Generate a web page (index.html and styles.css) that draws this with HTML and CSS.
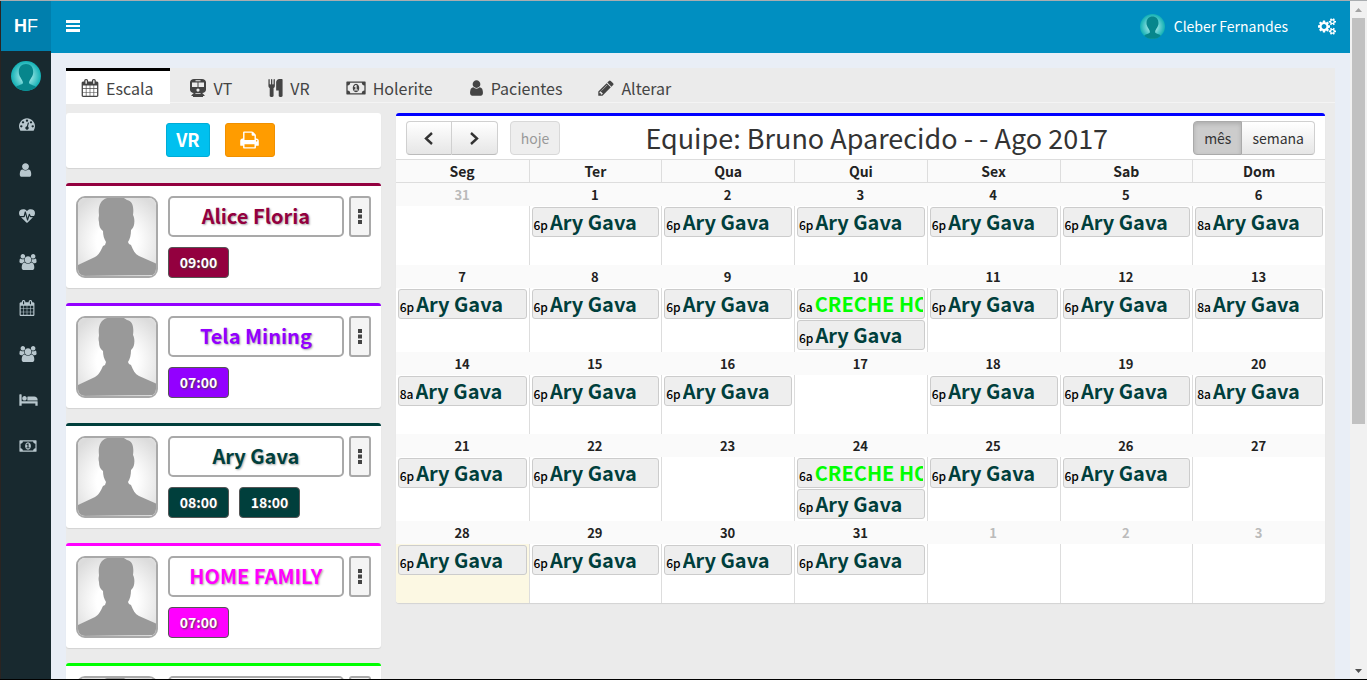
FILE: index.html
```html
<!DOCTYPE html>
<html lang="pt-BR">
<head>
<meta charset="utf-8">
<title>Escala - Home Family</title>
<link rel="stylesheet" href="styles.css">
</head>
<body>
<svg class="sprite" aria-hidden="true">
  <symbol id="i-user" viewBox="256 0 1280 1792"><path d="M1536 1399q0 109-62.500 187t-150.500 78h-854q-88 0-150.500-78t-62.500-187q0-85 8.500-160.500t31.500-152 58.500-131 94-89 134.500-34.500q131 128 313 128t313-128q76 0 134.500 34.500t94 89 58.500 131 31.500 152 8.500 160.500zm-256-887q0 159-112.500 271.500t-271.500 112.500-271.500-112.500-112.500-271.500 112.500-271.500 271.500-112.500 271.500 112.500 112.500 271.500z"/></symbol>
  <symbol id="i-calendar" viewBox="64 0 1664 1792"><path d="M192 1664h288v-288h-288v288zm352 0h320v-288h-320v288zm-352-352h288v-320h-288v320zm352 0h320v-320h-320v320zm-352-384h288v-288h-288v288zm736 736h320v-288h-320v288zm-384-736h320v-288h-320v288zm768 736h288v-288h-288v288zm-384-352h320v-320h-320v320zm-352-864v-288q0-13-9.500-22.500t-22.500-9.500h-64q-13 0-22.500 9.500t-9.500 22.500v288q0 13 9.500 22.500t22.500 9.500h64q13 0 22.500-9.500t9.500-22.500zm736 864h288v-320h-288v320zm-384-384h320v-288h-320v288zm384 0h288v-288h-288v288zm32-480v-288q0-13-9.500-22.500t-22.500-9.500h-64q-13 0-22.500 9.500t-9.500 22.500v288q0 13 9.500 22.500t22.500 9.500h64q13 0 22.500-9.500t9.500-22.500zm384-64v1280q0 52-38 90t-90 38h-1408q-52 0-90-38t-38-90v-1280q0-52 38-90t90-38h128v-96q0-66 47-113t113-47h64q66 0 113 47t47 113v96h384v-96q0-66 47-113t113-47h64q66 0 113 47t47 113v96h128q52 0 90 38t38 90z"/></symbol>
  <symbol id="i-cutlery" viewBox="192 0 1408 1792"><path d="M832 64v640q0 61-35.500 111t-92.500 70v779q0 52-38 90t-90 38h-128q-52 0-90-38t-38-90v-779q-57-20-92.500-70t-35.500-111v-640q0-26 19-45t45-19 45 19 19 45v416q0 26 19 45t45 19 45-19 19-45v-416q0-26 19-45t45-19 45 19 19 45v416q0 26 19 45t45 19 45-19 19-45v-416q0-26 19-45t45-19 45 19 19 45zm768 0v1600q0 52-38 90t-90 38h-128q-52 0-90-38t-38-90v-512h-224q-13 0-22.500-9.500t-9.500-22.500v-800q0-132 94-226t226-94h256q26 0 45 19t19 45z"/></symbol>
  <symbol id="i-pencil" viewBox="128 0 1536 1792"><path d="M491 1536l91-91-235-235-91 91v107h128v128h107zm523-928q0-22-22-22-10 0-17 7l-542 542q-7 7-7 17 0 22 22 22 10 0 17-7l542-542q7-7 7-17zm-54-192l416 416-832 832h-416v-416zm683 96q0 53-37 90l-166 166-416-416 166-165q36-38 90-38 53 0 91 38l235 234q37 39 37 91z"/></symbol>
  <symbol id="i-print" viewBox="64 0 1664 1792"><path d="M448 1536h896v-256h-896v256zm0-640h896v-384h-160q-40 0-68-28t-28-68v-160h-640v640zm1152 64q0-26-19-45t-45-19-45 19-19 45 19 45 45 19 45-19 19-45zm128 0v416q0 13-9.500 22.500t-22.500 9.500h-224v160q0 40-28 68t-68 28h-960q-40 0-68-28t-28-68v-160h-224q-13 0-22.500-9.500t-9.500-22.500v-416q0-79 56.500-135.500t135.500-56.500h64v-544q0-40 28-68t68-28h672q40 0 88 20t76 48l152 152q28 28 48 76t20 88v256h64q79 0 135.500 56.500t56.500 135.500z"/></symbol>
  <symbol id="i-gauge" viewBox="0 0 1792 1792"><path d="M384 1152q0-53-37.500-90.500t-90.500-37.500-90.500 37.500-37.500 90.500 37.500 90.500 90.500 37.500 90.500-37.500 37.500-90.500zm192-448q0-53-37.500-90.500t-90.500-37.500-90.500 37.500-37.500 90.500 37.500 90.500 90.500 37.500 90.500-37.500 37.500-90.500zm428 481l101-382q6-26-7.500-48.500t-38.500-29.500-48 6.500-30 39.500l-101 382q-60 5-107 43.500t-63 98.500q-20 77 20 146t117 89 146-20 89-117q16-60-6-117t-72-91zm660-33q0-53-37.500-90.500t-90.500-37.500-90.500 37.500-37.500 90.500 37.500 90.500 90.500 37.500 90.500-37.500 37.500-90.500zm-640-640q0-53-37.500-90.500t-90.500-37.500-90.500 37.500-37.500 90.500 37.500 90.500 90.500 37.500 90.500-37.500 37.500-90.500zm448 192q0-53-37.500-90.500t-90.500-37.500-90.500 37.500-37.500 90.500 37.500 90.500 90.500 37.500 90.500-37.500 37.500-90.500zm320 448q0 261-141 483-19 29-54 29h-1402q-35 0-54-29-141-221-141-483 0-182 71-348t191-286 286-191 348-71 348 71 286 191 191 286 71 348z"/></symbol>
  <symbol id="i-heart" viewBox="0 0 1792 1792"><path d="M1280 1024h305q-5 6-10 10.500t-9 7.500l-3 4-623 600q-18 18-44 18t-44-18l-624-602q-5-2-21-20h369q22 0 39.500-13.500t22.500-34.500l70-281 190 667q6 20 23 33t39 13q21 0 38-13t23-33l146-485 56 112q18 35 57 35zm512-428q0 145-103 300h-369l-111-221q-8-17-25.500-27t-36.500-8q-45 5-56 46l-129 430-196-686q-6-20-23.500-33t-39.500-13-39 13.500-22 34.500l-116 464h-423q-103-155-103-300 0-220 127-344t351-124q62 0 126.500 21.500t120 58 95.500 68.500 76 68q36-36 76-68t95.500-68.500 120-58 126.500-21.500q224 0 351 124t127 344z"/></symbol>
  <symbol id="i-users" viewBox="64 0 1920 1792"><path d="M657 896q-162 5-265 128h-134q-82 0-138-40.500t-56-118.500q0-353 124-353 6 0 43.500 21t97.500 42.500 119 21.500q67 0 133-23-5 37-5 66 0 139 81 256zm1071 637q0 120-73 189.500t-194 69.500h-874q-121 0-194-69.500t-73-189.500q0-53 3.500-103.500t14-109 26.500-108.500 43-97.500 62-81 85.500-53.500 111.500-20q10 0 43 21.500t73 48 107 48 135 21.500 135-21.500 107-48 73-48 43-21.500q61 0 111.500 20t85.500 53.500 62 81 43 97.500 26.500 108.500 14 109 3.500 103.500zm-1024-1277q0 106-75 181t-181 75-181-75-75-181 75-181 181-75 181 75 75 181zm704 384q0 159-112.500 271.500t-271.500 112.500-271.500-112.500-112.500-271.500 112.500-271.500 271.500-112.500 271.500 112.500 112.500 271.500zm576 225q0 78-56 118.500t-138 40.500h-134q-103-123-265-128 81-117 81-256 0-29-5-66 66 23 133 23 59 0 119-21.500t97.500-42.500 43.500-21q124 0 124 353zm-128-609q0 106-75 181t-181 75-181-75-75-181 75-181 181-75 181 75 75 181z"/></symbol>
  <symbol id="i-bed" viewBox="0 0 2048 1792"><path d="M256 1024h1728q26 0 45 19t19 45v448h-256v-256h-1536v256h-256v-1216q0-26 19-45t45-19h128q26 0 45 19t19 45v704zm576-320q0-106-75-181t-181-75-181 75-75 181 75 181 181 75 181-75 75-181zm1216 256v-64q0-159-112.500-271.500t-271.500-112.500h-704q-26 0-45 19t-19 45v384h1152z"/></symbol>
  <symbol id="i-money" viewBox="0 0 1920 1792"><path d="M768 1152h384v-96h-128v-448h-114l-148 137 77 80q42-37 55-57h2v288h-128v96zm512-256q0 70-21 142t-59.500 134-101.500 101-138 39-138-39-101.500-101-59.500-134-21-142 21-142 59.500-134 101.500-101 138-39 138 39 101.500 101 59.500 134 21 142zm512 256v-512q-106 0-181-75t-75-181h-1152q0 106-75 181t-181 75v512q106 0 181 75t75 181h1152q0-106 75-181t181-75zm128-832v1152q0 26-19 45t-45 19h-1792q-26 0-45-19t-19-45v-1152q0-26 19-45t45-19h1792q26 0 45 19t19 45z"/></symbol>
  <symbol id="i-cogs" viewBox="0 0 1920 1792"><path d="M896 896q0-106-75-181t-181-75-181 75-75 181 75 181 181 75 181-75 75-181zm768 512q0-52-38-90t-90-38-90 38-38 90q0 53 37.500 90.500t90.500 37.500 90.500-37.500 37.500-90.500zm0-1024q0-52-38-90t-90-38-90 38-38 90q0 53 37.500 90.500t90.500 37.500 90.500-37.500 37.500-90.500zm-384 421v185q0 10-7 19.500t-16 10.500l-155 24q-11 35-32 76 34 48 90 115 7 10 7 20 0 12-7 19-23 30-82.500 89.500t-78.500 59.500q-11 0-21-7l-115-90q-37 19-77 31-11 108-23 155-7 24-30 24h-186q-11 0-20-7.500t-10-17.500l-23-153q-34-10-75-31l-118 89q-7 7-20 7-11 0-21-8-144-133-144-160 0-9 7-19 10-14 41-53t47-61q-23-44-35-82l-152-24q-10-1-17-9.500t-7-19.500v-185q0-10 7-19.500t16-10.500l155-24q11-35 32-76-34-48-90-115-7-11-7-20 0-12 7-20 22-30 82-89t79-59q11 0 21 7l115 90q34-18 77-32 11-108 23-154 7-24 30-24h186q11 0 20 7.500t10 17.500l23 153q34 10 75 31l118-89q8-7 20-7 11 0 21 8 144 133 144 160 0 9-7 19-12 16-42 54t-45 60q23 48 34 82l152 23q10 2 17 10.500t7 19.500zm640 533v140q0 16-149 31-12 27-30 52 51 113 51 138 0 4-4 7-122 71-124 71-8 0-46-47t-52-68q-20 2-30 2t-30-2q-14 21-52 68t-46 47q-2 0-124-71-4-3-4-7 0-25 51-138-18-25-30-52-149-15-149-31v-140q0-16 149-31 13-29 30-52-51-113-51-138 0-4 4-7 4-2 35-20t59-34 30-16q8 0 46 46.500t52 67.500q20-2 30-2t30 2q51-71 92-112l6-2q4 0 124 70 4 3 4 7 0 25-51 138 17 23 30 52 149 15 149 31zm0-1024v140q0 16-149 31-12 27-30 52 51 113 51 138 0 4-4 7-122 71-124 71-8 0-46-47t-52-68q-20 2-30 2t-30-2q-14 21-52 68t-46 47q-2 0-124-71-4-3-4-7 0-25 51-138-18-25-30-52-149-15-149-31v-140q0-16 149-31 13-29 30-52-51-113-51-138 0-4 4-7 4-2 35-20t59-34 30-16q8 0 46 46.500t52 67.500q20-2 30-2t30 2q51-71 92-112l6-2q4 0 124 70 4 3 4 7 0 25-51 138 17 23 30 52 149 15 149 31z"/></symbol>
  <symbol id="i-train" viewBox="0 0 16 18"><path fill-rule="evenodd" d="M4 0h8c2.200 0 4 1.400 4 3.200v7.600c0 1.800-1.700 3.200-3.800 3.200l2.300 2.300c.3.300.1.700-.3.700H13v1H3v-1H1.800c-.4 0-.6-.4-.3-.7L3.800 14C1.700 14 0 12.600 0 10.800V3.200C0 1.400 1.800 0 4 0zM5.500 1.200v1h5v-1zM2 3.500V8h5.500V3.500zM8.500 3.500V8H14V3.500zM8 9.500a1.600 1.600 0 1 0 0 3.200 1.600 1.600 0 0 0 0-3.200zM5 15h6l-.8-.7H5.800z"/></symbol>
  <symbol id="i-bars" viewBox="0 0 14 12"><path d="M0 0h14v3H0zM0 5h14v2H0zM0 9h14v3H0z"/></symbol>
  <symbol id="i-dots" viewBox="0 0 4 15"><path d="M0 0h4v4H0zM0 5.500h4v4H0zM0 11h4v4H0z"/></symbol>
  <symbol id="i-left" viewBox="0 0 9 13"><path fill="none" stroke="currentColor" stroke-width="2.400" d="M8 1L2 6.500 8 12"/></symbol>
  <symbol id="i-right" viewBox="0 0 9 13"><path fill="none" stroke="currentColor" stroke-width="2.400" d="M1 1l6 5.500L1 12"/></symbol>
  <symbol id="i-photo" viewBox="0 0 78 78"><rect width="78" height="78" fill="url(#backdrop)"/><path fill="#999" d="M0 78V67l17-8c4-2 6-7 8-11l2-1 1-3c-2-3-3-7-3-11-3-2-4-5-4-9-1-4 0-5 0-7-1-8 1-15 8-17 8-3 15-2 20 2 6 1 7 8 6 15 2 3 2 11-1 14l-1 1c0 5-1 9-3 12l1 2 2 1c2 5 4 9 8 11l18 8v11z"/></symbol>
  <symbol id="i-face" viewBox="0 0 30 30"><circle cx="15" cy="15" r="15" fill="url(#teal)"/><path fill="#07868c" d="M5 26c2-2 6-2 7-4 0-3-3-5-4-9-1-6 2-10 7-10s8 4 7 10c-1 4-4 6-4 9 1 2 5 2 7 4a15 15 0 0 1-20 0z"/></symbol>
  <radialGradient id="backdrop" cx="50%" cy="55%" r="65%"><stop offset="40%" stop-color="#fff"/><stop offset="100%" stop-color="#dcdcdc"/></radialGradient>
  <radialGradient id="teal"><stop offset="35%" stop-color="#8fe0e0"/><stop offset="100%" stop-color="#10b0b4"/></radialGradient>
</svg>

<div class="app">
  <aside class="sidebar">
    <a class="logo" href="#"><span><b>H</b>F</span></a>
    <a class="me" href="#" aria-label="Perfil"><svg class="face"><use href="#i-face"/></svg></a>
    <nav class="menu">
      <a href="#" aria-label="Painel"><svg class="ic w16"><use href="#i-gauge"/></svg></a>
      <a href="#" aria-label="Usuário"><svg class="ic w13"><use href="#i-user"/></svg></a>
      <a href="#" aria-label="Saúde"><svg class="ic w16"><use href="#i-heart"/></svg></a>
      <a href="#" aria-label="Equipes"><svg class="ic w18"><use href="#i-users"/></svg></a>
      <a href="#" aria-label="Calendário"><svg class="ic w16"><use href="#i-calendar"/></svg></a>
      <a href="#" aria-label="Grupos"><svg class="ic w18"><use href="#i-users"/></svg></a>
      <a href="#" aria-label="Pacientes"><svg class="ic w19"><use href="#i-bed"/></svg></a>
      <a href="#" aria-label="Financeiro"><svg class="ic w18"><use href="#i-money"/></svg></a>
    </nav>
  </aside>

  <div class="page">
    <header class="topbar">
      <button class="plain" type="button" aria-label="Menu"><svg class="bars"><use href="#i-bars"/></svg></button>
      <div class="account">
        <a class="who" href="#"><svg class="face small"><use href="#i-face"/></svg>Cleber Fernandes</a>
        <button class="plain" type="button" aria-label="Configurações"><svg class="cogs"><use href="#i-cogs"/></svg></button>
      </div>
    </header>

    <main class="content">
      <div class="panel">
        <nav class="tabs">
          <a class="tab active" href="#"><svg class="t18"><use href="#i-calendar"/></svg>Escala</a>
          <a class="tab" href="#"><svg class="t16"><use href="#i-train"/></svg>VT</a>
          <a class="tab" href="#"><svg class="t15"><use href="#i-cutlery"/></svg>VR</a>
          <a class="tab" href="#"><svg class="t20"><use href="#i-money"/></svg>Holerite</a>
          <a class="tab" href="#"><svg class="t15"><use href="#i-user"/></svg>Pacientes</a>
          <a class="tab" href="#"><svg class="t16"><use href="#i-pencil"/></svg>Alterar</a>
        </nav>

        <div class="columns">
          <section class="team">
            <div class="box actions">
              <button class="btn info" type="button">VR</button>
              <button class="btn warn" type="button" aria-label="Imprimir"><svg><use href="#i-print"/></svg></button>
            </div>
            <article class="box card wine">
              <svg class="photo"><use href="#i-photo"/></svg>
              <div class="info-col">
                <div class="line"><button class="name" type="button">Alice Floria</button><button class="more" type="button" aria-label="Opções"><svg><use href="#i-dots"/></svg></button></div>
                <div class="times"><button class="time" type="button">09:00</button></div>
              </div>
            </article>
            <article class="box card violet">
              <svg class="photo"><use href="#i-photo"/></svg>
              <div class="info-col">
                <div class="line"><button class="name" type="button">Tela Mining</button><button class="more" type="button" aria-label="Opções"><svg><use href="#i-dots"/></svg></button></div>
                <div class="times"><button class="time" type="button">07:00</button></div>
              </div>
            </article>
            <article class="box card pine">
              <svg class="photo"><use href="#i-photo"/></svg>
              <div class="info-col">
                <div class="line"><button class="name" type="button">Ary Gava</button><button class="more" type="button" aria-label="Opções"><svg><use href="#i-dots"/></svg></button></div>
                <div class="times"><button class="time" type="button">08:00</button><button class="time" type="button">18:00</button></div>
              </div>
            </article>
            <article class="box card magenta">
              <svg class="photo"><use href="#i-photo"/></svg>
              <div class="info-col">
                <div class="line"><button class="name" type="button">HOME FAMILY</button><button class="more" type="button" aria-label="Opções"><svg><use href="#i-dots"/></svg></button></div>
                <div class="times"><button class="time" type="button">07:00</button></div>
              </div>
            </article>
            <article class="box card lime">
              <svg class="photo"><use href="#i-photo"/></svg>
              <div class="info-col">
                <div class="line"><button class="name" type="button"></button><button class="more" type="button" aria-label="Opções"><svg><use href="#i-dots"/></svg></button></div>
              </div>
            </article>
          </section>

          <section class="box calendar">
            <div class="toolbar">
              <div class="tools">
                <div class="group">
                  <button class="fc" type="button" aria-label="Anterior"><svg><use href="#i-left"/></svg></button>
                  <button class="fc" type="button" aria-label="Próximo"><svg><use href="#i-right"/></svg></button>
                </div>
                <button class="fc today-btn" type="button" disabled>hoje</button>
              </div>
              <h2>Equipe: Bruno Aparecido - - Ago 2017</h2>
              <div class="group">
                <button class="fc text on" type="button">mês</button>
                <button class="fc text" type="button">semana</button>
              </div>
            </div>
            <table>
              <thead><tr><th>Seg</th><th>Ter</th><th>Qua</th><th>Qui</th><th>Sex</th><th>Sab</th><th>Dom</th></tr></thead>
              <tbody>
                <tr class="nums"><td class="off">31</td><td>1</td><td>2</td><td>3</td><td>4</td><td>5</td><td>6</td></tr>
                <tr class="days">
                  <td></td>
                  <td><a class="ev" href="#"><span>6p</span><b>Ary Gava</b></a></td>
                  <td><a class="ev" href="#"><span>6p</span><b>Ary Gava</b></a></td>
                  <td><a class="ev" href="#"><span>6p</span><b>Ary Gava</b></a></td>
                  <td><a class="ev" href="#"><span>6p</span><b>Ary Gava</b></a></td>
                  <td><a class="ev" href="#"><span>6p</span><b>Ary Gava</b></a></td>
                  <td><a class="ev" href="#"><span>8a</span><b>Ary Gava</b></a></td>
                </tr>
                <tr class="nums"><td>7</td><td>8</td><td>9</td><td>10</td><td>11</td><td>12</td><td>13</td></tr>
                <tr class="days">
                  <td><a class="ev" href="#"><span>6p</span><b>Ary Gava</b></a></td>
                  <td><a class="ev" href="#"><span>6p</span><b>Ary Gava</b></a></td>
                  <td><a class="ev" href="#"><span>6p</span><b>Ary Gava</b></a></td>
                  <td><a class="ev green" href="#"><span>6a</span><b>CRECHE HO</b></a><a class="ev" href="#"><span>6p</span><b>Ary Gava</b></a></td>
                  <td><a class="ev" href="#"><span>6p</span><b>Ary Gava</b></a></td>
                  <td><a class="ev" href="#"><span>6p</span><b>Ary Gava</b></a></td>
                  <td><a class="ev" href="#"><span>8a</span><b>Ary Gava</b></a></td>
                </tr>
                <tr class="nums"><td>14</td><td>15</td><td>16</td><td>17</td><td>18</td><td>19</td><td>20</td></tr>
                <tr class="days">
                  <td><a class="ev" href="#"><span>8a</span><b>Ary Gava</b></a></td>
                  <td><a class="ev" href="#"><span>6p</span><b>Ary Gava</b></a></td>
                  <td><a class="ev" href="#"><span>6p</span><b>Ary Gava</b></a></td>
                  <td></td>
                  <td><a class="ev" href="#"><span>6p</span><b>Ary Gava</b></a></td>
                  <td><a class="ev" href="#"><span>6p</span><b>Ary Gava</b></a></td>
                  <td><a class="ev" href="#"><span>8a</span><b>Ary Gava</b></a></td>
                </tr>
                <tr class="nums"><td>21</td><td>22</td><td>23</td><td>24</td><td>25</td><td>26</td><td>27</td></tr>
                <tr class="days">
                  <td><a class="ev" href="#"><span>6p</span><b>Ary Gava</b></a></td>
                  <td><a class="ev" href="#"><span>6p</span><b>Ary Gava</b></a></td>
                  <td></td>
                  <td><a class="ev green" href="#"><span>6a</span><b>CRECHE HO</b></a><a class="ev" href="#"><span>6p</span><b>Ary Gava</b></a></td>
                  <td><a class="ev" href="#"><span>6p</span><b>Ary Gava</b></a></td>
                  <td><a class="ev" href="#"><span>6p</span><b>Ary Gava</b></a></td>
                  <td></td>
                </tr>
                <tr class="nums"><td>28</td><td>29</td><td>30</td><td>31</td><td class="off">1</td><td class="off">2</td><td class="off">3</td></tr>
                <tr class="days">
                  <td class="today"><a class="ev" href="#"><span>6p</span><b>Ary Gava</b></a></td>
                  <td><a class="ev" href="#"><span>6p</span><b>Ary Gava</b></a></td>
                  <td><a class="ev" href="#"><span>6p</span><b>Ary Gava</b></a></td>
                  <td><a class="ev" href="#"><span>6p</span><b>Ary Gava</b></a></td>
                  <td></td><td></td><td></td>
                </tr>
              </tbody>
            </table>
          </section>
        </div>
      </div>
    </main>
  </div>

  <div class="scroll" aria-hidden="true">
    <svg class="arrow up" viewBox="0 0 17 17"><path d="M5 11l3.500-4 3.500 4z"/></svg>
    <div class="track"><div class="thumb"></div></div>
    <svg class="arrow" viewBox="0 0 17 17"><path d="M5 7l3.500 4L12 7z"/></svg>
  </div>
</div>
</body>
</html>
```
FILE: styles.css
```css
* { box-sizing: border-box; }
body {
  margin: 0;
  font-family: "Noto Sans CJK SC", "Noto Sans", sans-serif;
  font-size: 13px;
  line-height: 18px;
  color: #333;
  background: #e9eef6;
}
a { color: inherit; text-decoration: none; }
button { font: inherit; color: inherit; padding: 0; margin: 0; cursor: pointer; }
svg { display: block; fill: currentColor; flex: none; }
.sprite { position: absolute; width: 0; height: 0; }

.app {
  display: grid;
  grid-template-columns: 51px minmax(0, 1fr) 17px;
  height: 100vh;
  overflow: hidden;
  border-top: 1px solid #a9adb0;
  border-bottom: 1px solid #000;
}

/* Sidebar */
.sidebar { background: #18292f; border-left: 1px solid #2a2422; color: #b8c7ce; }
.logo {
  display: flex; align-items: center; justify-content: center;
  height: 50px; background: #007fad; color: #fff;
  font: 18px "Liberation Sans", sans-serif;
}
.me { display: block; padding: 10px; }
.face { width: 30px; height: 30px; }
.face.small { width: 25px; height: 25px; }
.menu a { display: flex; align-items: center; height: 46px; padding-left: 18px; }
.ic { height: 16px; }
.w13 { width: 13px; }
.w16 { width: 16px; }
.w18 { width: 18px; }
.w19 { width: 19px; }

/* Top bar */
.page { display: flex; flex-direction: column; min-height: 0; }
.topbar {
  display: flex; align-items: center; justify-content: space-between;
  flex: none; height: 52px; padding: 0 14px 2px 15px; background: #008fc1; color: #fff;
}
.plain { border: 0; background: none; }
.bars { width: 14px; height: 12px; }
.cogs { width: 18px; height: 17px; }
.account { display: flex; align-items: center; gap: 30px; }
.who { display: flex; align-items: center; gap: 9px; font-size: 14px; }

/* Tabs */
.content { flex: 1; min-height: 0; padding: 15px 15px 0; overflow: hidden; }
.panel { background: #ebebeb; min-height: 100%; }
.tabs { display: flex; gap: 5px; height: 35px; border-bottom: 1px solid #f4f4f4; }
.tab {
  display: flex; align-items: center; gap: 7px;
  height: 36px; padding: 0 16px 0 15px; border-top: 3px solid transparent;
  font-size: 16px; color: #444;
}
.tab.active { background: #fff; border-top-color: #000; padding-right: 17px; }
.tab svg { height: 18px; }
.t15 { width: 15px; }
.t16 { width: 16px; }
.t18 { width: 18px; }
.t20 { width: 20px; }

/* Boxes */
.columns {
  display: grid; grid-template-columns: 25% minmax(0, 1fr); gap: 15px;
  align-items: start; padding: 10px 10px 0 0;
}
.team { display: flex; flex-direction: column; gap: 15px; }
.box { background: #fff; border-radius: 3px; box-shadow: 0 1px 1px rgba(0, 0, 0, .1); }
.actions { display: flex; justify-content: center; gap: 15px; padding: 10px 16px 11px 10px; }
.btn {
  display: flex; align-items: center; justify-content: center;
  height: 34px; padding-bottom: 2px; border: 1px solid; border-radius: 3px; color: #fff;
  font-size: 18px; font-weight: 700;
}
.info { width: 44px; background: #00c0ef; border-color: #00acd6; }
.warn { width: 50px; padding-bottom: 0; background: #ff9c00; border-color: #f09000; }
.btn svg { width: 19px; height: 20px; }

.card { display: flex; gap: 10px; padding: 10px; border-top: 3px solid var(--tone); }
.wine { --tone: #93003f; }
.violet { --tone: #9300ff; }
.pine { --tone: #003f3c; }
.magenta { --tone: #ff00ff; }
.lime { --tone: #00ff00; }
.photo { width: 82px; height: 82px; border: 2px solid #a9a9a9; border-radius: 9px; }
.info-col { flex: 1; min-width: 0; display: flex; flex-direction: column; gap: 10px; }
.line { display: flex; gap: 5px; }
.name {
  flex: 1; height: 41px; padding-bottom: 2px; background: #fff; border: 2px solid #a9a9a9; border-radius: 5px;
  color: var(--tone); font-size: 20px; font-weight: 700;
  text-shadow: 1px 1px 2px #aaa;
}
.more {
  display: flex; align-items: center; justify-content: center;
  width: 22px; height: 41px; background: #f4f4f4; border: 2px solid #a9a9a9; border-radius: 3px; color: #444;
}
.more svg { width: 4px; height: 15px; }
.times { display: flex; gap: 10px; }
.time {
  width: 61px; height: 31px; padding-bottom: 2px; background: var(--tone); border: 1px solid #555; border-radius: 4px;
  color: #fff; font-size: 14px; font-weight: 700; text-shadow: 1px 1px 2px #444;
}

/* Calendar */
.calendar { border-top: 3px solid #00f; overflow: hidden; }
.toolbar { display: flex; align-items: center; justify-content: space-between; padding: 5px 10px 4px; }
.toolbar h2 { margin: 0; font-size: 27px; font-weight: 400; line-height: 32px; }
.tools { display: flex; gap: 12px; }
.group { display: flex; }
.fc {
  display: flex; align-items: center; justify-content: center;
  width: 46px; height: 34px; border: 1px solid #d0d0d0; border-bottom-color: #bbb; border-radius: 4px;
  background: linear-gradient(#fff, #e6e6e6); font-size: 14px; color: #333;
}
.fc svg { width: 9px; height: 13px; }
.group .fc:first-child { border-top-right-radius: 0; border-bottom-right-radius: 0; }
.group .fc:last-child { border-left: 0; border-top-left-radius: 0; border-bottom-left-radius: 0; }
.fc.text, .fc.today-btn { width: auto; padding: 0 10px; }
.fc.today-btn { background: #eee; border-color: #d8d8d8; color: #999; }
.fc.text.on { background: #ccc; border-color: #aaa; box-shadow: inset 0 2px 4px rgba(0, 0, 0, .15); }

table { width: 100%; table-layout: fixed; border-collapse: separate; border-spacing: 0; color: #222; }
th, td { padding: 0; vertical-align: top; }
th {
  height: 24px; background: #fafafa; border: 1px solid #ddd; border-width: 1px 0 1px 1px;
  font-size: 14px; line-height: 22px;
}
.nums td { height: 23px; background: #fafafa; font-weight: 700; line-height: 23px; text-align: center; }
.nums .off { color: #bbb; }
.days td { height: 59px; padding: 1px 2px; border-left: 1px solid #ddd; }
th:first-child, .days td:first-child { border-left: 0; }
.days .today { background: #fcf8e3; }
.ev {
  display: flex; align-items: baseline; gap: 2px; height: 30px; padding: 0 1px; margin-bottom: 1px;
  background: #eee; border: 1px solid #ccc; border-radius: 3px;
  color: #003f3c; overflow: hidden; white-space: nowrap;
}
.ev span { color: #000; font-size: 12px; font-weight: 500; }
.ev b { min-width: 0; overflow: hidden; font-size: 20px; line-height: 28px; }
.ev.green { color: #00ff00; }

/* Scroll bar */
.scroll { display: flex; flex-direction: column; background: #f1f1f1; }
.arrow { width: 17px; height: 17px; color: #505050; }
.arrow.up { color: #a3a3a3; }
.track { flex: 1; padding: 0 2px; }
.thumb { height: 63%; background: #c1c1c1; }
```
